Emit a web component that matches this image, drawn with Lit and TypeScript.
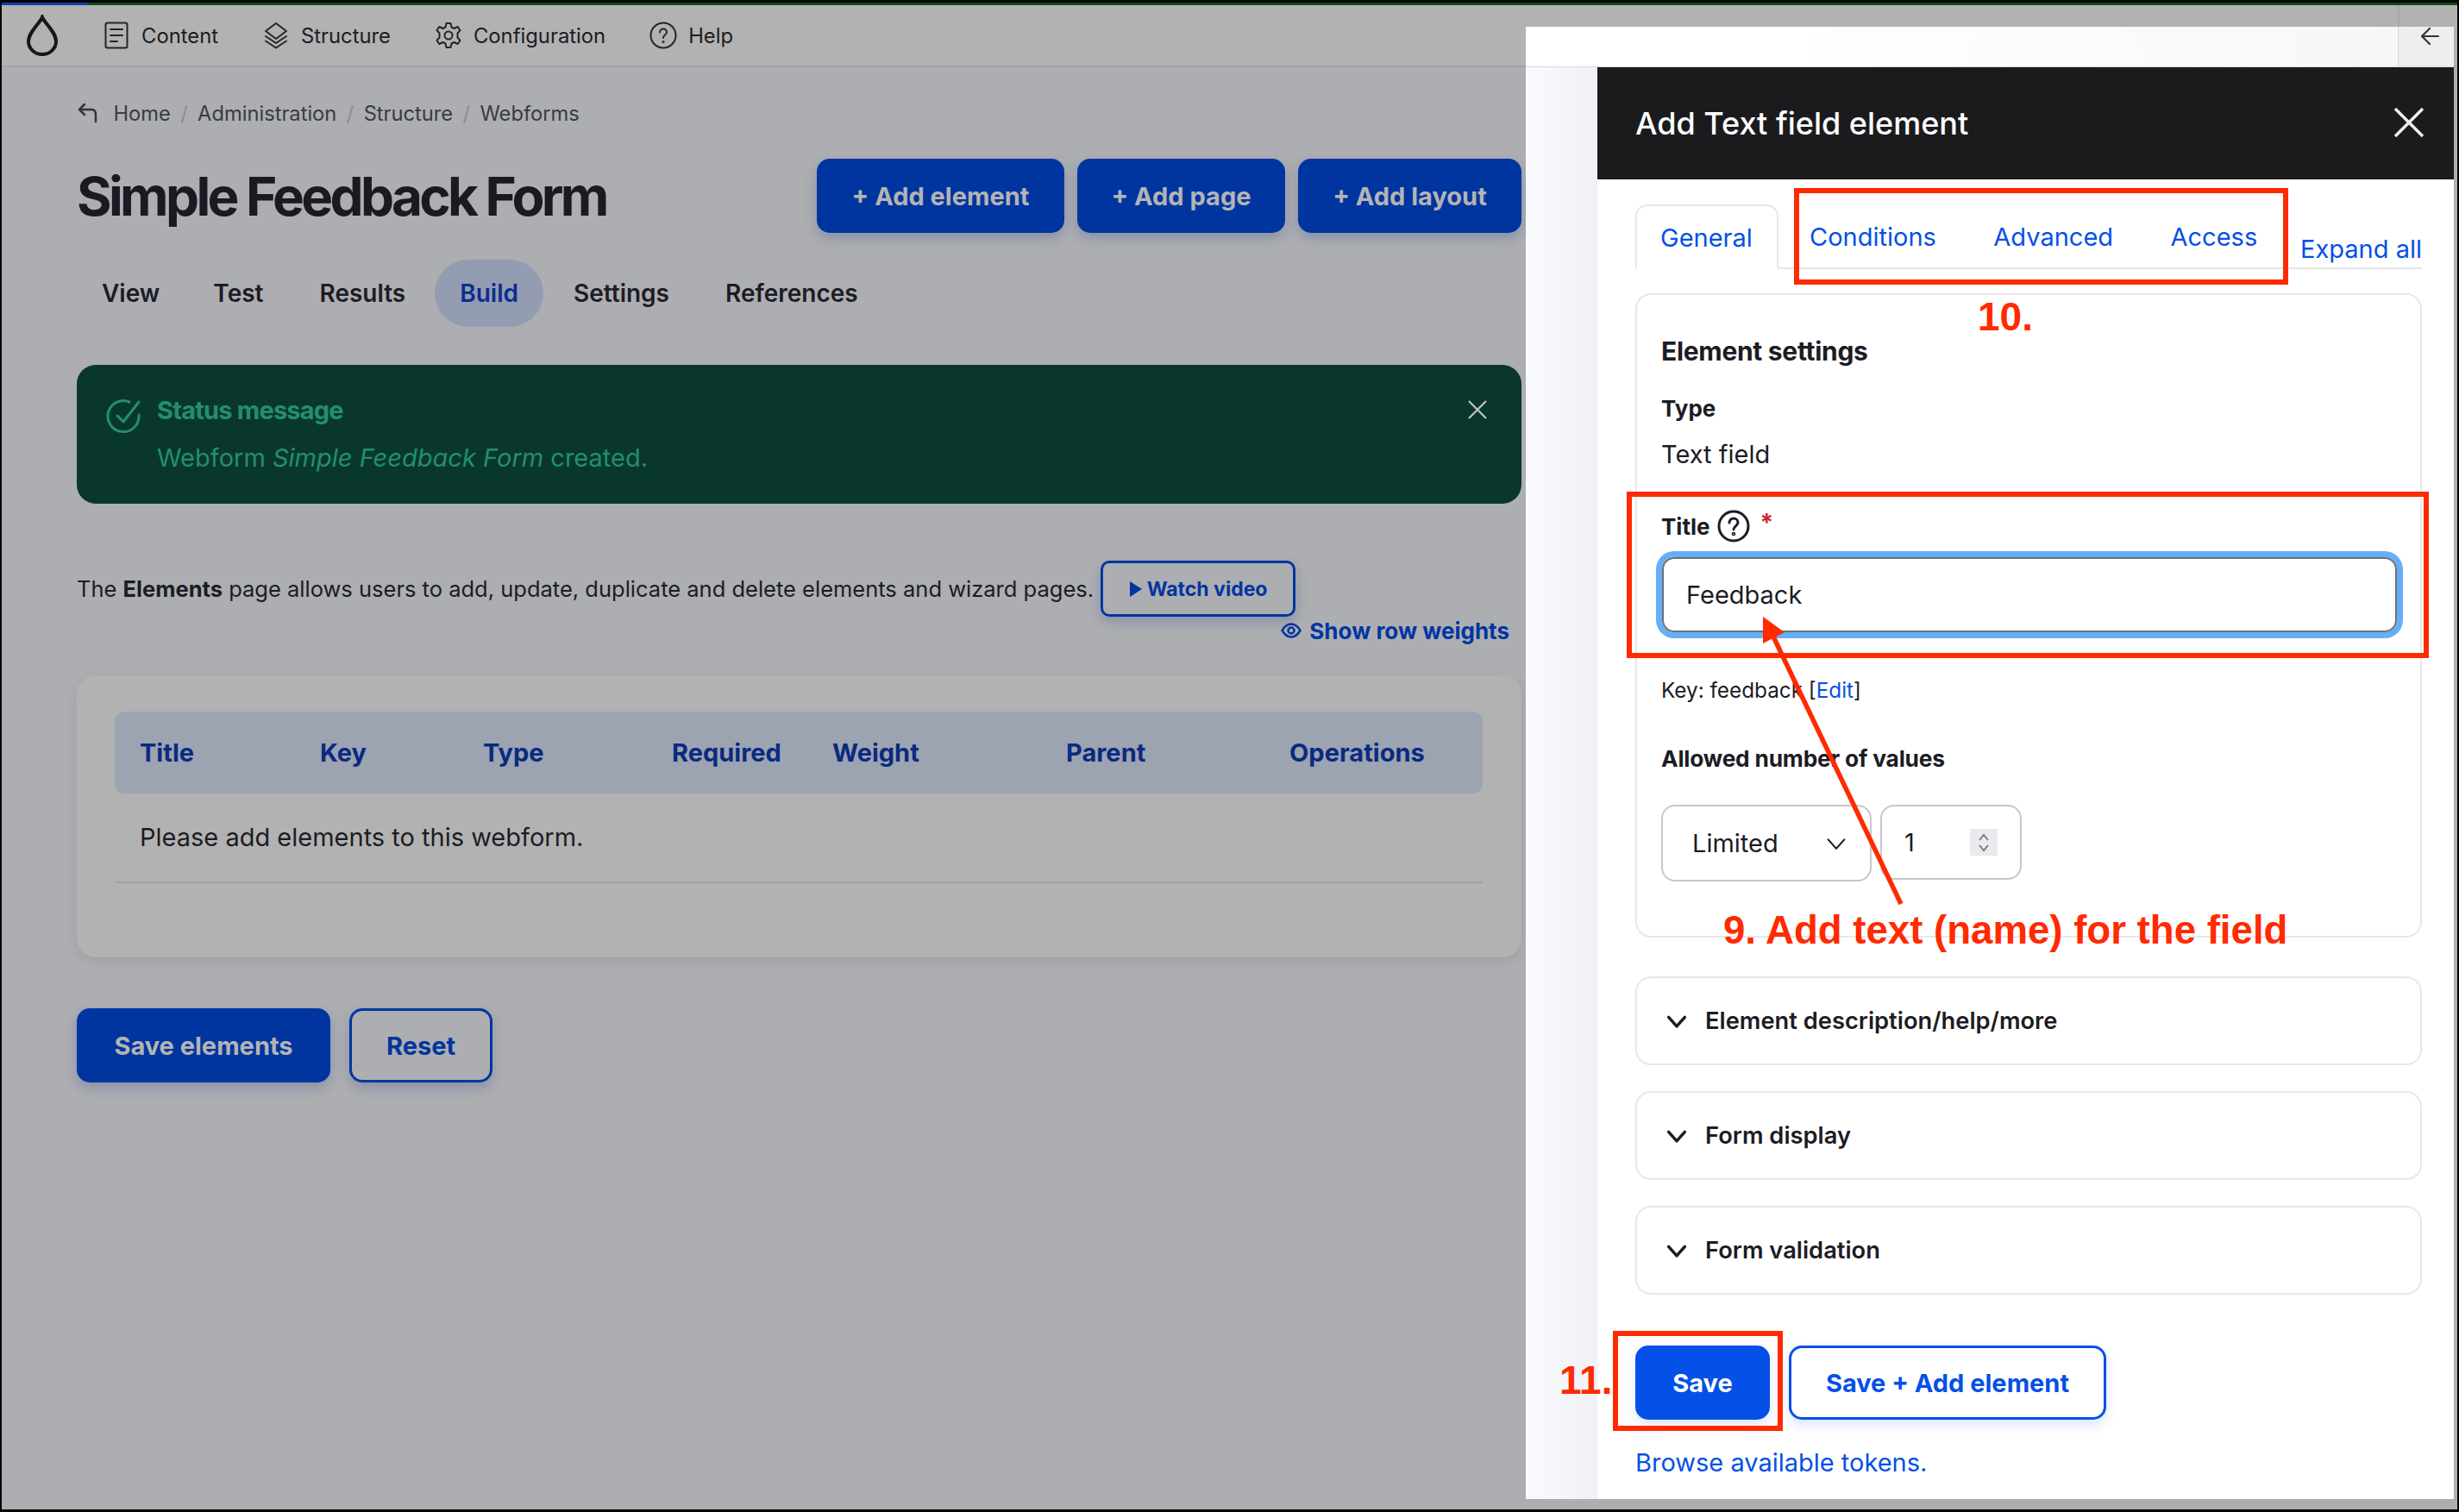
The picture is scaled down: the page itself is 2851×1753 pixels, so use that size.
import {css, html, LitElement, svg} from 'lit';
import {customElement} from 'lit/decorators.js';

const chevron = (w: number, sw: number) => html`<svg width=${w} height=${w} viewBox="0 0 24 24" fill="none" stroke="currentColor" stroke-width=${sw} stroke-linecap="round" stroke-linejoin="round"><path d="M4 8l8 9 8-9"/></svg>`;

const icons = {
  content: svg`<rect x="3.500" y="1.500" width="25" height="29" rx="2"/><path d="M9 9h14M9 16h14M9 23h8"/>`,
  structure: svg`<path d="M16 2l12 9-12 9-12-9z"/><path d="M4 17l12 8 12-8M4 22.500l12 8 12-8"/>`,
  config: svg`<circle cx="16" cy="16" r="4.500"/><path d="M13.500 2h5l1 4.500 3 1.500 4.200-2 2.800 4.200-3 3.300v5l3 3.300-2.800 4.200-4.200-2-3 1.500-1 4.500h-5l-1-4.500-3-1.500-4.200 2-2.800-4.200 3-3.300v-5l-3-3.300 2.800-4.200 4.200 2 3-1.500z"/>`,
  help: svg`<circle cx="16" cy="16" r="14.500"/><path d="M12 12.500c0-2.500 2-4 4-4s4 1.500 4 3.800c0 3.400-4 3.200-4 6.700"/><circle cx="16" cy="23.500" r=".6"/>`,
};

@customElement('app-root')
export class AppRoot extends LitElement {
  static override styles = css`
    :host {
      display: block;
      font-family: Inter, 'Noto Sans', sans-serif;
      color: #1c1c24;
    }
    * { box-sizing: border-box; }

    .frame {
      position: relative;
      width: 2851px;
      height: 1753px;
      padding: 0 2px 3px;
      background: #050505;
      overflow: hidden;
      display: flex;
      flex-direction: column;
    }
    .topline {
      height: 6px;
      display: flex;
      border-top: 3px solid #050505;
    }
    .topline i { background: #0f4a0c; flex: 1; }
    .topline i:first-child { background: #0d3fa8; flex: 0 0 101px; }
    .window {
      flex: 1;
      background: #adaeb2;
    }

    .toolbar {
      height: 72px;
      padding: 0 0 0 28px;
      background: #b2b2b2;
      border-bottom: 2px solid #a2a2a4;
      display: flex;
      align-items: center;
      gap: 51px;
      font-size: 23.800px;
    }
    .tb-item { display: flex; align-items: center; gap: 13px; }
    .tb-item svg { fill: none; stroke: #24242c; stroke-width: 2; stroke-linejoin: round; stroke-linecap: round; }
    .tb-end {
      margin-left: auto;
      width: 69px;
      height: 100%;
      border-left: 2px solid #a6a6a6;
    }

    .page {
      width: 1675px;
      margin-left: 87px;
      display: flex;
      flex-direction: column;
    }
    .crumbs {
      margin-top: 38px;
      height: 30px;
      display: flex;
      align-items: center;
      gap: 11.400px;
      font-size: 23.700px;
      color: #3a3b44;
    }
    .crumbs .sep { color: #8b8c92; }
    .crumbs svg { margin-right: 3px; }
    .head {
      margin-top: 38px;
      height: 86px;
      display: flex;
      align-items: center;
      justify-content: space-between;
    }
    h1 {
      margin: 0;
      font-size: 62px;
      font-weight: 700;
      letter-spacing: -3.650px;
      color: #1a1a22;
    }
    .head-btns { display: flex; gap: 15px; }
    .btn {
      height: 86px;
      border-radius: 15px;
      display: flex;
      align-items: center;
      justify-content: center;
      font-size: 29px;
      font-weight: 700;
      background: #0035a0;
      color: #b4b4b4;
      box-shadow: 0 6px 14px rgba(0, 40, 130, 0.22);
    }
    .btn.outline {
      background: transparent;
      color: #0035a0;
      border: 3px solid #0035a0;
    }

    .tabs {
      margin-top: 31px;
      height: 78px;
      display: flex;
      align-items: center;
      padding-left: 29px;
      font-size: 28px;
      font-weight: 600;
    }
    .tabs span { display: block; }
    .tabs .active {
      height: 78px;
      padding: 0 29px;
      border-radius: 39px;
      line-height: 78px;
      background: #949cb1;
      color: #0a2e8e;
    }

    .status {
      margin-top: 44px;
      height: 161px;
      padding: 36px 39px 0 34px;
      border-radius: 22px;
      background: #0a372d;
      color: #22906a;
      display: flex;
      gap: 17px;
    }
    .status-icon { flex: none; margin-top: 2px; }
    .status-text { flex: 1; }
    .status-title { font-size: 29px; font-weight: 700; line-height: 34px; letter-spacing: -0.800px; }
    .status-body { margin-top: 20px; font-size: 29px; line-height: 36px; }
    .status-close { flex: none; margin-top: 4px; color: #c2c2c2; }

    .intro {
      margin-top: 66px;
      height: 65px;
      display: flex;
      align-items: center;
      gap: 8px;
      font-size: 25.500px;
    }
    .watch {
      width: 226px;
      height: 65px;
      border-radius: 10px;
      font-size: 23px;
      gap: 5px;
    }
    .watch svg { fill: currentColor; }
    .weights {
      height: 32px;
      padding-right: 14px;
      display: flex;
      justify-content: flex-end;
      align-items: center;
      gap: 9px;
      font-size: 26px;
      font-weight: 700;
      color: #0035a0;
    }
    .card {
      margin-top: 36px;
      height: 327px;
      padding: 42px 45px 0 44px;
      border-radius: 22px;
      background: #b2b2b2;
      box-shadow: 0 4px 12px rgba(60, 60, 70, 0.12);
    }
    .thead {
      height: 95px;
      padding-left: 29px;
      border-radius: 12px;
      background: #9ca3b1;
      display: grid;
      grid-template-columns: 209px 189px 219px 186px 271px 259px 1fr;
      align-items: center;
      font-size: 29px;
      font-weight: 700;
      color: #0a2a80;
    }
    .empty {
      height: 104px;
      padding: 31px 0 0 29px;
      border-bottom: 2px solid #a3a3a5;
      font-size: 29px;
      line-height: 40px;
    }
    .page-actions {
      margin-top: 59px;
      display: flex;
      gap: 22px;
    }

    .dialog {
      position: absolute;
      left: 1769px;
      top: 31px;
      width: 1076px;
      height: 1707px;
      display: flex;
      flex-direction: column;
      background: #fff;
    }
    .dialog-top {
      height: 47px;
      flex: none;
      background: linear-gradient(90deg, #fff 30%, #f6f6f6);
      border-bottom: 1px solid #d8d8d8;
      display: flex;
      justify-content: flex-end;
    }
    .back {
      width: 65px;
      border-left: 1px solid #d6d6d6;
      padding-left: 24px;
      background: #eeeeee;
      color: #333;
    }
    .back svg { display: block; }
    .dialog-main { flex: 1; display: flex; }
    .strip {
      width: 83px;
      background: linear-gradient(90deg, #fafbfe, #f0f1f6);
    }
    .panel { flex: 1; display: flex; flex-direction: column; }
    .panel-title {
      height: 130px;
      padding: 0 33px 0 44px;
      background: #1b1b1d;
      color: #fff;
      display: flex;
      align-items: center;
      justify-content: space-between;
      font-size: 36px;
      font-weight: 500;
    }
    .panel-title svg { color: #eee; margin-top: -2px; }
    .panel-body {
      padding: 0 37px 0 44px;
      display: flex;
      flex-direction: column;
    }
    .ptabs {
      margin-top: 29px;
      height: 75px;
      border-bottom: 2px solid #e6e6e6;
      display: flex;
      font-size: 29px;
      color: #0550e6;
    }
    .ptab { height: 75px; line-height: 76px; }
    .ptab.active {
      width: 166px;
      border: 2px solid #e8e8e8;
      border-bottom-color: #fff;
      border-radius: 14px 14px 0 0;
      line-height: 74px;
      padding-left: 27px;
    }
    .ptab.c { margin-left: 36px; }
    .ptab.d { margin-left: 66.500px; }
    .expand { margin-left: auto; line-height: 30px; padding-top: 37px; }
    .settings {
      margin-top: 28px;
      height: 747px;
      padding: 48px 28px 0;
      border: 2px solid #e8e8e8;
      border-radius: 18px;
    }
    .s-title { font-size: 30px; font-weight: 700; line-height: 34px; letter-spacing: -0.300px; }
    .s-label { margin-top: 35px; font-size: 26px; font-weight: 700; line-height: 30px; }
    .s-value { margin-top: 21px; font-size: 29px; line-height: 34px; }
    .title-row {
      margin-top: 47px;
      height: 38px;
      display: flex;
      align-items: center;
      gap: 8px;
      font-size: 26px;
      font-weight: 700;
    }
    .req { color: #d0262e; margin: -8px 0 0 4px; font-size: 28px; }
    .input {
      margin: 17px -1px 0 1px;
      height: 87px;
      padding-left: 26px;
      border: 2px solid #6b7078;
      border-radius: 14px;
      box-shadow: 0 0 0 7px #66aff5;
      display: flex;
      align-items: center;
      font-size: 29px;
    }
    .key { margin-top: 52px; font-size: 24.300px; line-height: 30px; }
    .key a { color: #0550e6; }
    .allowed { margin-top: 49px; font-size: 26.300px; font-weight: 700; line-height: 32px; letter-spacing: -0.200px; }
    .limits { margin-top: 37px; display: flex; gap: 10px; }
    .box {
      height: 89px;
      border: 2px solid #c6c6ce;
      border-radius: 16px;
      display: flex;
      align-items: center;
      font-size: 29px;
    }
    .select { width: 244px; padding: 0 25px 0 34px; justify-content: space-between; }
    .number { width: 164px; height: 87px; padding: 0 26px 0 26px; justify-content: space-between; }
    .spin {
      width: 32px;
      height: 31px;
      background: #eaeaee;
      display: flex;
      flex-direction: column;
      align-items: center;
      justify-content: center;
      color: #75757d;
      line-height: 0;
    }
    .section {
      height: 103px;
      margin-top: 30px;
      padding-left: 32px;
      border: 2px solid #e8e8e8;
      border-radius: 18px;
      display: flex;
      align-items: center;
      gap: 19px;
      font-size: 27.300px;
      font-weight: 600;
    }
    .section.first { margin-top: 45px; }
    .panel-actions { margin-top: 59px; display: flex; gap: 22px; }
    .panel-actions .btn { background: #0550e6; color: #fff; box-shadow: 0 6px 14px rgba(5, 80, 230, 0.14); }
    .panel-actions .btn.outline { background: #fff; color: #0550e6; border-color: #0550e6; }
    .browse { margin-top: 31px; font-size: 29px; line-height: 38px; color: #0550e6; }

    .red-box {
      position: absolute;
      border: 6px solid #ff2a00;
    }
    .note {
      position: absolute;
      font-family: 'Liberation Sans', Arial, sans-serif;
      font-weight: 700;
      color: #ff2a00;
      white-space: nowrap;
      line-height: 1;
    }
    .arrow { position: absolute; left: 0; top: 0; pointer-events: none; }
  `;

  private toolbarIcon(name: keyof typeof icons, label: string) {
    return html`<div class="tb-item">
      <svg width="32" height="32" viewBox="0 0 32 32">${icons[name]}</svg>
      <span>${label}</span>
    </div>`;
  }

  private renderPage() {
    const crumbs = ['Administration', 'Structure', 'Webforms'];
    const heads = ['Title', 'Key', 'Type', 'Required', 'Weight', 'Parent', 'Operations'];
    return html`<div class="page">
      <div class="crumbs">
        <svg width="28" height="28" viewBox="0 0 28 28" fill="none" stroke="#34343c" stroke-width="2.500" stroke-linecap="round" stroke-linejoin="round"><path d="M9 4L3 10l6 6M3 10h14c4 0 5 3 5 6v8"/></svg>
        <span>Home</span>
        ${crumbs.map(c => html`<span class="sep">/</span><span>${c}</span>`)}
      </div>
      <div class="head">
        <h1>Simple Feedback Form</h1>
        <div class="head-btns">
          <div class="btn" style="width:287px">+ Add element</div>
          <div class="btn" style="width:241px">+ Add page</div>
          <div class="btn" style="width:259px">+ Add layout</div>
        </div>
      </div>
      <div class="tabs">
        <span>View</span>
        <span style="margin-left:62px">Test</span>
        <span style="margin-left:65px">Results</span>
        <span class="active" style="margin-left:34px">Build</span>
        <span style="margin-left:35px">Settings</span>
        <span style="margin-left:65px">References</span>
      </div>
      <div class="status">
        <svg class="status-icon" width="42" height="44" viewBox="0 0 42 44" fill="none" stroke="currentColor" stroke-width="3" stroke-linecap="round" stroke-linejoin="round">
          <path d="M38 20v2a18 18 0 1 1-11-17"/><path d="M13 21l7 7L38 5"/>
        </svg>
        <div class="status-text">
          <div class="status-title">Status message</div>
          <div class="status-body">Webform <em>Simple Feedback Form</em> created.</div>
        </div>
        <svg class="status-close" width="24" height="24" viewBox="0 0 24 24" fill="none" stroke="currentColor" stroke-width="2.200"><path d="M2 2l20 20M22 2L2 22"/></svg>
      </div>
      <div class="intro">
        <span>The <b>Elements</b> page allows users to add, update, duplicate and delete elements and wizard pages.</span>
        <div class="btn outline watch">
          <svg width="16" height="20" viewBox="0 0 16 20"><path d="M1 1l14 9-14 9z"/></svg>
          Watch video
        </div>
      </div>
      <div class="weights">
        <svg width="24" height="24" viewBox="0 0 24 24" fill="none" stroke="currentColor" stroke-width="2.500"><path d="M1.500 12C5 6 8.500 4.500 12 4.500S19 6 22.500 12C19 18 15.500 19.500 12 19.500S5 18 1.500 12z"/><circle cx="12" cy="12" r="3.500"/></svg>
        <span>Show row weights</span>
      </div>
      <div class="card">
        <div class="thead">${heads.map(h => html`<span>${h}</span>`)}</div>
        <div class="empty">Please add elements to this webform.</div>
      </div>
      <div class="page-actions">
        <div class="btn" style="width:294px">Save elements</div>
        <div class="btn outline" style="width:166px">Reset</div>
      </div>
    </div>`;
  }

  private renderDialog() {
    const sections = ['Element description/help/more', 'Form display', 'Form validation'];
    return html`<div class="dialog">
      <div class="dialog-top">
        <div class="back">
          <svg width="24" height="24" viewBox="0 0 24 24" fill="none" stroke="currentColor" stroke-width="2.200" stroke-linecap="round" stroke-linejoin="round"><path d="M12 2L3 11l9 9M3 11h19"/></svg>
        </div>
      </div>
      <div class="dialog-main">
        <div class="strip"></div>
        <div class="panel">
          <div class="panel-title">
            <span>Add Text field element</span>
            <svg width="38" height="38" viewBox="0 0 38 38" fill="none" stroke="currentColor" stroke-width="3.500"><path d="M3 3l32 32M35 3L3 35"/></svg>
          </div>
          <div class="panel-body">
            <div class="ptabs">
              <div class="ptab active">General</div>
              <div class="ptab c">Conditions</div>
              <div class="ptab d">Advanced</div>
              <div class="ptab d">Access</div>
              <div class="expand">Expand all</div>
            </div>
            <div class="settings">
              <div class="s-title">Element settings</div>
              <div class="s-label">Type</div>
              <div class="s-value">Text field</div>
              <div class="title-row">
                <span>Title</span>
                <svg width="38" height="38" viewBox="0 0 38 38" fill="none" stroke="#1c1c24" stroke-width="3" stroke-linecap="round"><circle cx="19" cy="19" r="17"/><path d="M14 15c0-3 2.500-5 5-5s5 2 5 4.800c0 4-5 4-5 8"/><circle cx="19" cy="28" r=".8"/></svg>
                <span class="req">*</span>
              </div>
              <div class="input">Feedback</div>
              <div class="key">Key: feedback [<a>Edit</a>]</div>
              <div class="allowed">Allowed number of values</div>
              <div class="limits">
                <div class="box select"><span>Limited</span>${chevron(28, 1.800)}</div>
                <div class="box number">
                  <span>1</span>
                  <div class="spin">
                    <svg width="14" height="13" viewBox="0 0 14 13" fill="none" stroke="currentColor" stroke-width="1.800"><path d="M2 10l5-6 5 6"/></svg>
                    <svg width="14" height="13" viewBox="0 0 14 13" fill="none" stroke="currentColor" stroke-width="1.800"><path d="M2 3l5 6 5-6"/></svg>
                  </div>
                </div>
              </div>
            </div>
            ${sections.map((s, i) => html`<div class="section ${i === 0 ? 'first' : ''}">${chevron(28, 3)}<span>${s}</span></div>`)}
            <div class="panel-actions">
              <div class="btn" style="width:156px">Save</div>
              <div class="btn outline" style="width:368px">Save + Add element</div>
            </div>
            <div class="browse">Browse available tokens.</div>
          </div>
        </div>
      </div>
    </div>`;
  }

  private renderNotes() {
    return html`
      <div class="red-box" style="left:2080px;top:218px;width:573px;height:112px"></div>
      <div class="red-box" style="left:1886px;top:570px;width:930px;height:193px"></div>
      <div class="red-box" style="left:1870px;top:1543px;width:197px;height:116px"></div>
      <svg class="arrow" width="2851" height="1753" viewBox="0 0 2851 1753">
        <path d="M2204 1048L2056 738" stroke="#ff2a00" stroke-width="5.500" fill="none"/>
        <path d="M2044 715L2044 746L2069 733z" fill="#ff2a00"/>
      </svg>
      <div class="note" style="left:2293px;top:344px;font-size:46px">10.</div>
      <div class="note" style="left:1998px;top:1056px;font-size:45.600px">9. Add text (name) for the field</div>
      <div class="note" style="left:1808px;top:1577px;font-size:46px">11.</div>
    `;
  }

  override render() {
    return html`<div class="frame">
      <div class="topline"><i></i><i></i></div>
      <div class="window">
        <div class="toolbar">
          <svg width="38" height="48" viewBox="0 0 38 48" fill="none" stroke="#16161c" stroke-width="4"><path d="M19 3c2 6 16 17 16 28a16 15 0 0 1-32 0C3 20 17 9 19 3z"/></svg>
          ${this.toolbarIcon('content', 'Content')}
          ${this.toolbarIcon('structure', 'Structure')}
          ${this.toolbarIcon('config', 'Configuration')}
          ${this.toolbarIcon('help', 'Help')}
          <div class="tb-end"></div>
        </div>
        ${this.renderPage()}
      </div>
      ${this.renderDialog()}
      ${this.renderNotes()}
    </div>`;
  }
}

declare global {
  interface HTMLElementTagNameMap {
    'app-root': AppRoot;
  }
}
